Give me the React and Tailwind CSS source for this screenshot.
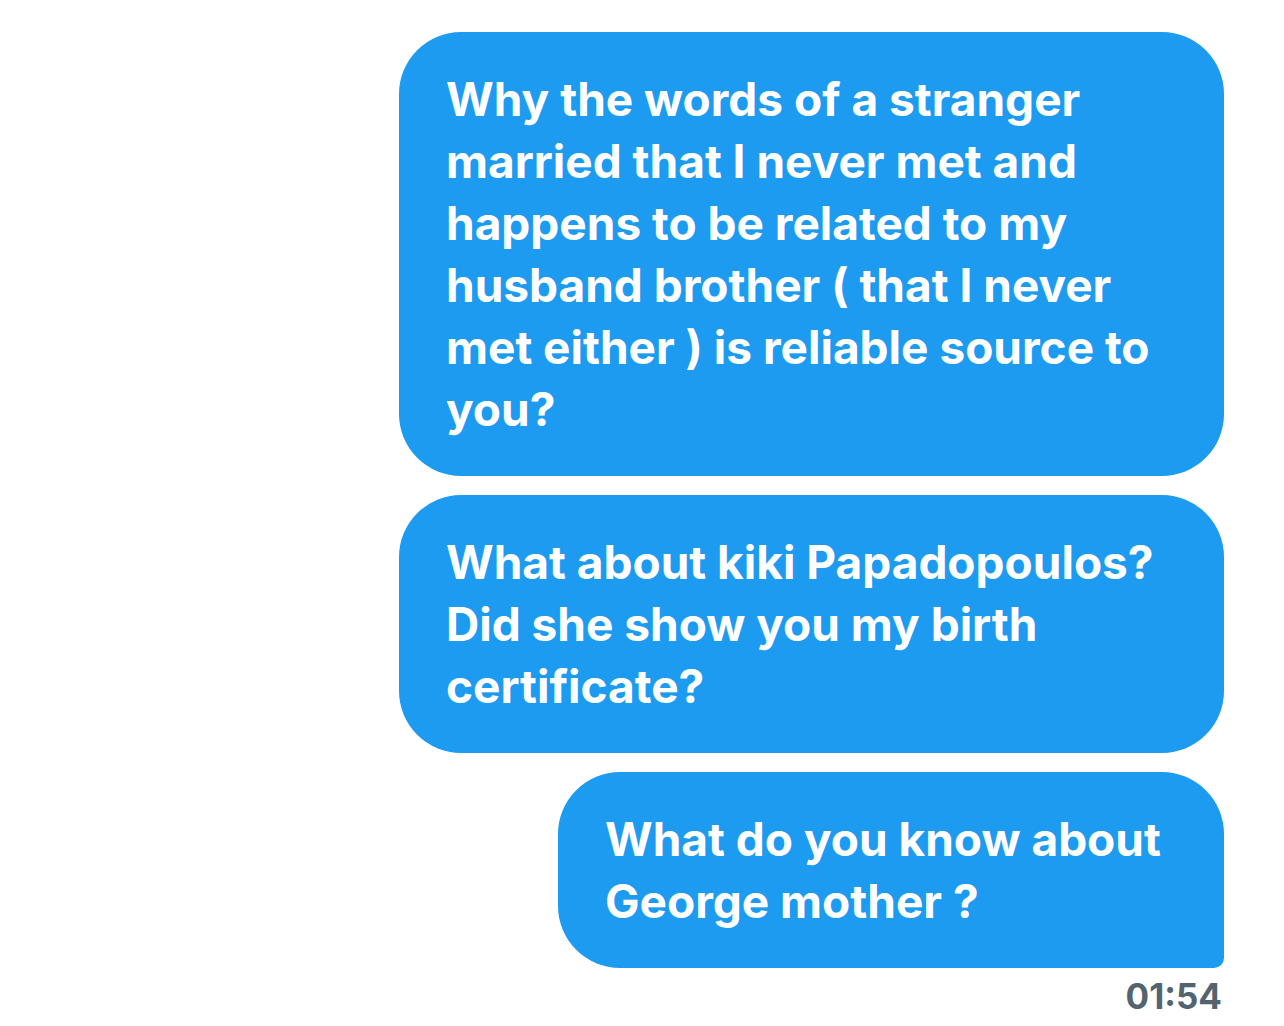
const MESSAGES = [
  {
    lines: [
      'Why the words of a stranger',
      'married that I never met and',
      'happens to be related to my',
      'husband brother ( that I never',
      'met either ) is reliable source to',
      'you?',
    ],
    width: 'w-[825px]',
    corner: 'rounded-[62px]',
  },
  {
    lines: ['What about kiki Papadopoulos?', 'Did she show you my birth', 'certificate?'],
    width: 'w-[825px]',
    corner: 'rounded-[62px]',
  },
  {
    lines: ['What do you know about', 'George mother ?'],
    width: 'w-[666px]',
    corner: 'rounded-[62px] rounded-br-[10px]',
  },
]

function Bubble({ msg }) {
  return (
    <div className={`${msg.width} ${msg.corner} bg-[#1d9bf0] pl-[47px] pr-[40px] py-[36px] text-white`}>
      {msg.lines.map((line, i) => (
        <div key={i} className="whitespace-nowrap text-[46px] leading-[62px] font-bold">
          {line}
        </div>
      ))}
    </div>
  )
}

export default function App() {
  return (
    <div
      className="min-h-[1026px] w-[1284px] bg-white pt-[32px] pr-[60px] flex flex-col items-end gap-[19px]"
      style={{ fontFamily: 'Inter, "Noto Sans", sans-serif' }}
    >
      {MESSAGES.map((m, i) => (
        <Bubble key={i} msg={m} />
      ))}
      <div className="-mt-[13px] mr-[2px] text-[35px] leading-[44px] font-bold text-[#536471]">01:54</div>
    </div>
  )
}
